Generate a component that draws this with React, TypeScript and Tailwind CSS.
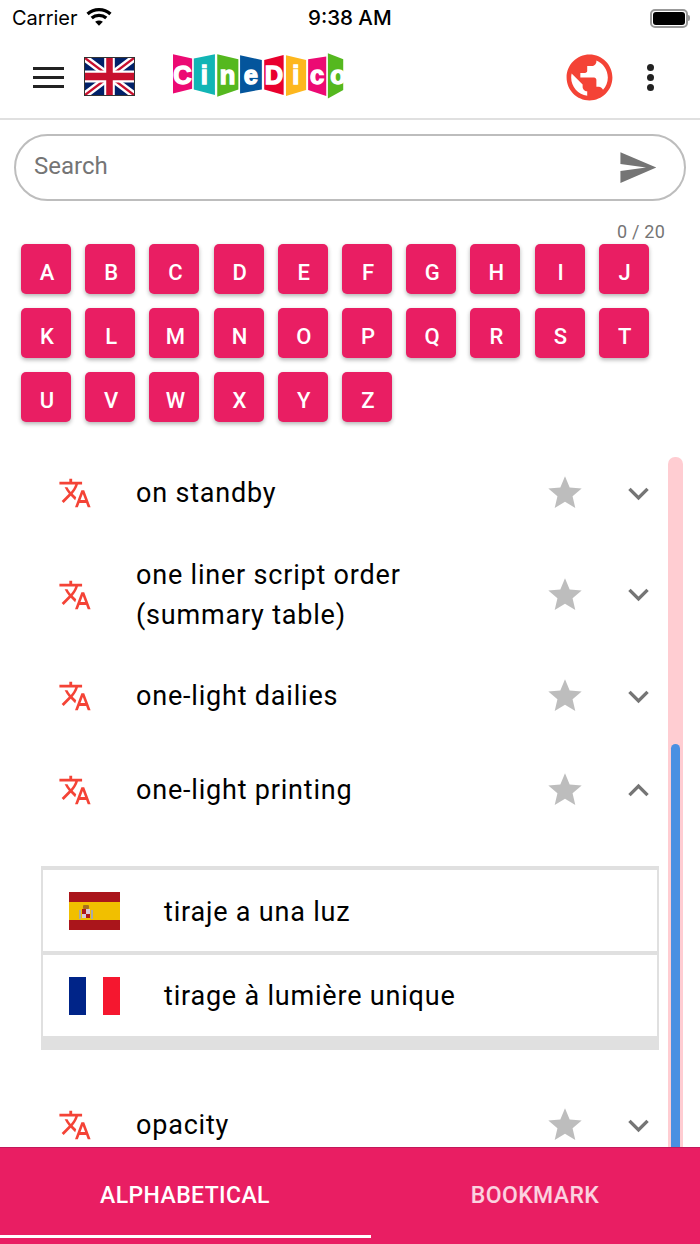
import React from 'react';

const translatePath = "M12.87 15.07l-2.54-2.51.03-.03c1.74-1.94 2.98-4.17 3.71-6.53H17V4h-7V2H8v2H1v1.99h11.17C11.5 7.92 10.44 9.75 9 11.35 8.07 10.32 7.3 9.19 6.69 8h-2c.73 1.63 1.73 3.17 2.98 4.56l-5.09 5.02L4 19l5-5 3.11 3.11.76-2.04zM18.5 10h-2L12 22h2l1.12-3h4.75L21 22h2l-4.5-12zm-2.62 7l1.62-4.33L19.12 17h-3.24z";
const starPath = "M12 17.27L18.18 21l-1.64-7.03L22 9.24l-7.19-.61L12 2 9.19 8.63 2 9.24l5.46 4.73L5.82 21z";
const chevronDown = "M16.59 8.59L12 13.17 7.41 8.59 6 10l6 6 6-6z";
const chevronUp = "M12 8l-6 6 1.41 1.41L12 10.83l4.59 4.58L18 14z";

const Ic = ({ d, className }: { d: string; className: string }) => (
  <svg viewBox="0 0 24 24" fill="currentColor" className={className}><path d={d} /></svg>
);

const UkFlag = () => (
  <svg viewBox="0 0 60 40" preserveAspectRatio="none" className="w-[51px] h-[39px] border border-[#333] box-border">
    <rect width="60" height="40" fill="#012169" />
    <path d="M0 0L60 40M60 0L0 40" stroke="#fff" strokeWidth="8" />
    <path d="M0 0L60 40M60 0L0 40" stroke="#c8102e" strokeWidth="2.6" />
    <path d="M30 0V40M0 20H60" stroke="#fff" strokeWidth="13" />
    <path d="M30 0V40M0 20H60" stroke="#c8102e" strokeWidth="8" />
  </svg>
);

const panels: [string, string, string, number][] = [
  ['40,30 97,43 97,133 40,147', '#ec0a73', 'C', 68],
  ['102,43 165,30 165,152 102,135', '#12b5b5', 'i', 133],
  ['172,30 235,45 235,135 172,157', '#55b81f', 'n', 203],
  ['240,33 305,47 305,135 240,147', '#04559c', 'e', 272],
  ['312,47 370,32 370,152 312,135', '#e9002d', 'D', 341],
  ['377,33 437,47 437,137 377,155', '#fdb71e', 'i', 406],
  ['443,45 497,37 497,155 443,137', '#ec0a73', 'c', 470],
  ['502,27 548,45 548,137 502,162', '#55b81f', 'o', 532],
];

const Logo = () => (
  <svg viewBox="40 27 510 136" className="w-[171px] h-[46px]">
    {panels.map(([pts, fill, ch, x]) => (
      <g key={pts}>
        <polygon points={pts} fill={fill} />
        <text x={x} y="118" textAnchor="middle" fill="#fff" stroke="#fff" strokeWidth="4" fontFamily="'Liberation Sans', sans-serif" fontWeight="700" fontSize="76">{ch}</text>
      </g>
    ))}
    <rect x="549" y="27" width="10" height="136" fill="#fff" />
  </svg>
);

const SpainFlag = () => (
  <svg viewBox="0 0 51 38" className="w-[51px] h-[38px] shrink-0">
    <rect width="51" height="38" fill="#aa151b" />
    <rect y="10" width="51" height="18" fill="#f1bf00" />
    <rect x="10" y="18" width="2" height="9" fill="#a9a9a9" />
    <rect x="22" y="18" width="2" height="9" fill="#a9a9a9" />
    <rect x="13" y="17" width="4" height="5" fill="#ad1519" />
    <rect x="17" y="17" width="4" height="5" fill="#d8c8d8" />
    <rect x="13" y="22" width="4" height="4" fill="#d8c8d8" />
    <rect x="17" y="22" width="4" height="4" fill="#ad1519" />
    <rect x="14" y="13" width="6" height="4" rx="1" fill="#a8701c" />
  </svg>
);

const FranceFlag = () => (
  <div className="w-[51px] h-[38px] shrink-0 flex">
    <div className="w-[17px] bg-[#002488]" />
    <div className="w-[17px] bg-white" />
    <div className="w-[17px] bg-[#f5172f]" />
  </div>
);

const Row = ({ text, open, className }: { text: React.ReactNode; open?: boolean; className: string }) => (
  <div className={`flex items-center pl-[58px] ${className}`}>
    <Ic d={translatePath} className="w-[34px] h-[34px] text-[#f44336] shrink-0" />
    <div className="ml-[44px] flex-1 text-[27px] leading-[40px] tracking-[0.8px] text-black">{text}</div>
    <Ic d={starPath} className="w-[40px] h-[40px] text-[#bdbdbd] shrink-0" />
    <Ic d={open ? chevronUp : chevronDown} className="w-[41px] h-[41px] ml-[33px] mr-[41px] text-[#757575] shrink-0" />
  </div>
);

const rows = ['ABCDEFGHIJ', 'KLMNOPQRST', 'UVWXYZ'];

export default function App() {
  return (
    <div className="w-[700px] h-[1244px] overflow-hidden bg-white flex flex-col font-['Roboto',sans-serif]">
      <div className="h-[36px] shrink-0 relative flex items-center pl-[12px] pr-[10px] justify-between font-['Inter',sans-serif] text-black">
        <div className="flex items-center gap-[8px]">
          <span className="text-[20px] leading-none">Carrier</span>
          <svg viewBox="0 0 25 18" className="w-[26px] h-[19px] -mt-[3px]" fill="none" stroke="#000" strokeWidth="3.2">
            <path d="M1.5 6.5C7.5 1 17.5 1 23.5 6.5" />
            <path d="M5.5 10.5C9.5 7 15.5 7 19.5 10.5" />
            <path d="M12.5 18L8.8 14C11 12.4 14 12.4 16.2 14Z" fill="#000" stroke="none" />
          </svg>
        </div>
        <span className="absolute left-[308px] top-[6px] text-[20.5px] leading-[24px] font-medium">9:38 AM</span>
        <div className="flex items-center">
          <div className="w-[38px] h-[19px] rounded-[5px] border-2 border-[#999] p-[1px]">
            <div className="w-full h-full rounded-[3px] bg-black" />
          </div>
          <div className="w-[2px] h-[6px] bg-[#999] rounded-r" />
        </div>
      </div>

      <div className="h-[84px] shrink-0 border-b-2 border-[#e0e0e0] flex items-center pl-[28px]">
        <svg viewBox="0 0 31 21" className="w-[31px] h-[21px] shrink-0 ml-[5px]" fill="#222">
          <rect width="31" height="3" /><rect y="9" width="31" height="3" /><rect y="18" width="31" height="3" />
        </svg>
        <div className="ml-[20px] -mt-[1px]"><UkFlag /></div>
        <div className="ml-[38px] -mt-[2px]"><Logo /></div>
        <svg viewBox="0 0 24 24" fill="#f44336" className="w-[55px] h-[55px] ml-[218px] shrink-0">
          <path d="M12 2C6.48 2 2 6.48 2 12s4.48 10 10 10 10-4.48 10-10S17.52 2 12 2zm-1 17.93c-3.95-.49-7-3.85-7-7.93 0-.62.08-1.21.21-1.79L9 15v1c0 1.1.9 2 2 2v1.93zm6.9-2.54c-.26-.81-1-1.39-1.9-1.39h-1v-3c0-.55-.45-1-1-1H8v-2h2c.55 0 1-.45 1-1V7h2c1.1 0 2-.9 2-2v-.41c2.93 1.19 5 4.06 5 7.41 0 2.08-.8 3.97-2.1 5.39z" />
        </svg>
        <div className="ml-[30px] flex flex-col gap-[3px]">
          <div className="w-[7px] h-[7px] rounded-full bg-[#222]" />
          <div className="w-[7px] h-[7px] rounded-full bg-[#222]" />
          <div className="w-[7px] h-[7px] rounded-full bg-[#222]" />
        </div>
      </div>

      <div className="mx-[14px] mt-[14px] h-[67px] shrink-0 rounded-[34px] border-2 border-[#bdbdbd] flex items-center pl-[18px] pr-[30px] justify-between">
        <span className="text-[24px] text-[#757575] -mt-[4px]">Search</span>
        <Ic d="M2.01 21L23 12 2.01 3 2 10l15 2-15 2z" className="w-[41px] h-[41px] text-[#757575] -mr-[4px]" />
      </div>

      <div className="h-[43px] shrink-0 flex items-end justify-end pr-[35px] text-[18px] leading-[24px] text-[#757575] tracking-[0.2px]">
        <span>0 / 20</span>
      </div>

      <div className="flex flex-col gap-[14px] pl-[21px] shrink-0">
        {rows.map(r => (
          <div key={r} className="flex gap-[14.2px]">
            {r.split('').map(ch => (
              <div key={ch} className="w-[50px] h-[50px] rounded-[5px] bg-[#e91e63] text-white text-[22px] font-medium pt-[7px] pl-[2px] flex items-center justify-center shadow-[0_2px_4px_rgba(0,0,0,0.3)]">{ch}</div>
            ))}
          </div>
        ))}
      </div>

      <div className="flex-1 min-h-0 relative mt-[24px] overflow-hidden">
        <div className="absolute left-[668px] top-[11px] bottom-0 w-[15px] bg-[#ffcdd2] rounded-t-[7px]" />
        <div className="absolute left-[671px] top-[298px] bottom-0 w-[9px] bg-[#4a90e2] rounded-t-[5px]" />
        <Row text="on standby" className="h-[94px]" />
        <Row text={<>one liner script order<br />(summary table)</>} className="h-[109px]" />
        <Row text="one-light dailies" className="h-[94px]" />
        <Row text="one-light printing" open className="h-[94px]" />
        <div className="ml-[41px] w-[618px] mt-[29px] bg-[#e0e0e0] pt-[4px] pb-[14px] px-[2px] flex flex-col gap-[4px]">
          <div className="h-[81px] bg-white flex items-center pl-[26px] text-[27px] tracking-[0.8px] text-black">
            <SpainFlag /><span className="ml-[44px] pt-[3px]">tiraje a una luz</span>
          </div>
          <div className="h-[81px] bg-white flex items-center pl-[26px] text-[27px] tracking-[0.8px] text-black">
            <FranceFlag /><span className="ml-[44px] pt-[2px]">tirage à lumière unique</span>
          </div>
        </div>
        <Row text="opacity" className="h-[94px] mt-[28px]" />
      </div>

      <div className="h-[97px] shrink-0 bg-[#e91e63] border-t border-[#c2185b] flex relative">
        <div className="w-[370px] flex items-center justify-center text-white text-[23px] tracking-[0.4px] font-medium">ALPHABETICAL</div>
        <div className="w-[330px] flex items-center justify-center text-white/80 text-[23px] tracking-[0.4px] font-medium">BOOKMARK</div>
        <div className="absolute left-0 bottom-[6px] w-[371px] h-[3px] bg-white" />
      </div>
    </div>
  );
}
